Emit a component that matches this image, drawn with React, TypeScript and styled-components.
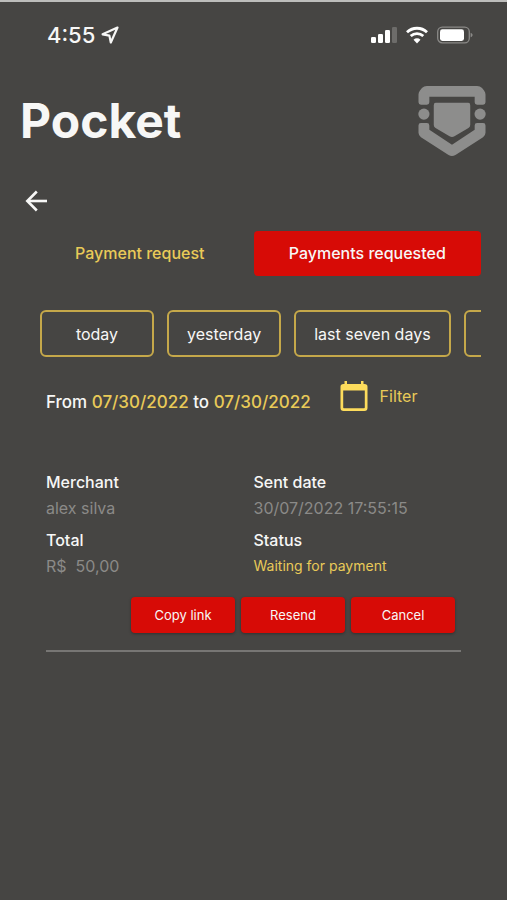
import React from "react";
import styled, { createGlobalStyle } from "styled-components";

const color = {
  background: "#464543",
  edge: "#bdbdbb",
  white: "#f7f7f6",
  gold: "#e9ca58",
  goldBright: "#fddc5c",
  goldLine: "#c5a84a",
  red: "#d70b06",
  muted: "#8b8a88",
  line: "#777674",
  logo: "#8d8d8c",
};

const GlobalStyle = createGlobalStyle`
  *, *::before, *::after { box-sizing: border-box; }
  body {
    margin: 0;
    background: ${color.background};
    color: ${color.white};
    font-family: Inter, "Liberation Sans", sans-serif;
  }
  button { font-family: inherit; cursor: pointer; }
  h1, p, dl, dt, dd { margin: 0; }
`;

const Screen = styled.div`
  min-height: 100vh;
  border-top: 2px solid ${color.edge};
  background: ${color.background};
`;

const StatusBar = styled.div`
  display: flex;
  align-items: center;
  justify-content: space-between;
  height: 66px;
  padding: 0 34px 0 47px;
`;

const StatusGroup = styled.div<{ $gap: number }>`
  display: flex;
  align-items: center;
  gap: ${({ $gap }) => $gap}px;
`;

const Clock = styled.span`
  font-size: 22px;
  line-height: 28px;
  font-weight: 500;
`;

const Header = styled.header`
  display: flex;
  align-items: center;
  justify-content: space-between;
  height: 106px;
  padding: 0 21px 0 20px;
`;

const Title = styled.h1`
  font-size: 48px;
  line-height: 60px;
  font-weight: 700;
`;

const BackButton = styled.button`
  display: block;
  width: 32px;
  height: 32px;
  margin: 11px 0 0 20px;
  padding: 0;
  border: 0;
  background: none;
  color: ${color.white};

  svg { display: block; }
`;

const Content = styled.main`
  padding: 14px 26px 24px;
`;

const Tabs = styled.nav`
  display: grid;
  grid-template-columns: 1fr 1fr;
`;

const Tab = styled.button<{ $active?: boolean }>`
  height: 45px;
  padding: 0 0 2px;
  border: 0;
  border-radius: 4px;
  font-size: 16px;
  line-height: 24px;
  font-weight: 500;
  background: ${({ $active }) => ($active ? color.red : "none")};
  color: ${({ $active }) => ($active ? color.white : color.gold)};
`;

const Chips = styled.div`
  display: flex;
  gap: 13px;
  margin-top: 34px;
  padding-left: 14px;
  overflow-x: auto;
  scrollbar-width: none;
`;

const Chip = styled.button`
  flex: none;
  min-width: 114px;
  height: 47px;
  padding: 0 18px;
  border: 2px solid ${color.goldLine};
  border-radius: 6px;
  background: none;
  color: ${color.white};
  font-size: 16px;
  line-height: 24px;
`;

const FilterRow = styled.div`
  display: flex;
  align-items: flex-end;
  gap: 27px;
  margin-top: 23px;
  padding-left: 20px;
`;

const Range = styled.p`
  font-size: 17px;
  line-height: 20px;
  font-weight: 500;
  white-space: nowrap;
`;

const Day = styled.time`
  color: ${color.gold};
`;

const FilterButton = styled.button`
  display: flex;
  align-items: center;
  gap: 10px;
  padding: 0;
  border: 0;
  background: none;
  color: ${color.gold};
  font-size: 16px;
  line-height: 24px;
`;

const Payment = styled.article`
  margin: 57px 20px 0;
  border-bottom: 2px solid ${color.line};
  padding-bottom: 17px;
`;

const Details = styled.dl`
  display: grid;
  grid-template-columns: 1fr 1fr;
  row-gap: 6px;
`;

const Field = styled.div``;

const Label = styled.dt`
  font-size: 16px;
  line-height: 26px;
  font-weight: 500;
`;

const Value = styled.dd<{ $highlight?: boolean }>`
  font-size: ${({ $highlight }) => ($highlight ? 14 : 16)}px;
  line-height: 26px;
  white-space: pre;
  color: ${({ $highlight }) => ($highlight ? color.gold : color.muted)};
`;

const Actions = styled.div`
  display: flex;
  justify-content: flex-end;
  gap: 6px;
  margin-top: 18px;
  padding-right: 6px;
`;

const ActionButton = styled.button`
  width: 104px;
  height: 36px;
  padding: 0;
  border: 0;
  border-radius: 4px;
  background: ${color.red};
  box-shadow: 0 1px 3px rgba(0, 0, 0, 0.3);
  color: ${color.white};
  font-size: 13px;
  line-height: 20px;
  font-weight: 400;
`;

const LocationIcon = () => (
  <svg width="18" height="18" viewBox="0 0 18 18" fill="none" stroke={color.white} strokeWidth="2.2" strokeLinejoin="round" aria-hidden="true">
    <path d="M16.500 1.500 1.600 8.300 8.400 9.600 9.800 16.500Z" />
  </svg>
);

const SignalIcon = () => (
  <svg width="26" height="18" viewBox="0 0 26 18" fill="#fff" aria-hidden="true">
    <rect x="0" y="11" width="5" height="6" rx="1.3" />
    <rect x="7" y="8" width="5" height="9" rx="1.3" />
    <rect x="14" y="4" width="5" height="13" rx="1.3" />
    <rect x="21" y="1" width="5" height="16" rx="1.3" fill="#6d6c6a" />
  </svg>
);

const WifiIcon = () => (
  <svg width="22" height="18" viewBox="0 0 22 18" fill="none" stroke="#fff" strokeWidth="2.8" aria-hidden="true">
    <path d="M1 6.3C6.6.9 15.4.9 21 6.3" />
    <path d="M4.7 10.1c3.6-3.4 9-3.4 12.6 0" />
    <path d="M11 17.4 7.5 13.7c2-1.8 5-1.8 7 0Z" fill="#fff" stroke="none" />
  </svg>
);

const BatteryIcon = () => (
  <svg width="36" height="18" viewBox="0 0 36 18" fill="none" aria-hidden="true">
    <rect x="0.7" y="1.2" width="31.6" height="15.6" rx="4.6" stroke="#8a8987" strokeWidth="1.3" />
    <rect x="3" y="3.3" width="24" height="11.6" rx="2.4" fill="#fff" />
    <path d="M33.6 6.7c2.6.8 2.6 3.8 0 4.6Z" fill="#8a8987" />
  </svg>
);

const ShieldLogo = () => (
  <svg width="68" height="72" viewBox="0 0 69 72" fill={color.logo} role="img" aria-label="Pocket logo">
    <path d="M9 .5H60Q63 .5 65 2.6L67 5Q68.500 7 68.500 9V17Q68.500 19.500 66 19.500H60Q57.500 19.500 57.500 17V11.500H11.500V17Q11.500 19.500 9 19.500H3Q.5 19.500 .5 17V9Q.5 7 2 5L4 2.600Q6 .5 9 .5Z" />
    <circle cx="6" cy="29" r="5.700" />
    <circle cx="63" cy="29" r="5.700" />
    <path d="M18 17.500H51Q53 17.500 53 20V40Q53 42 51.200 43.200L37 51.500Q34.500 53 32 51.500L17.800 43.200Q16 42 16 40V20Q16 17.500 18 17.500Z" />
    <path d="M3 38H9Q11.500 38 11.500 40.500V45L34.500 60 57.500 45V40.500Q57.500 38 60 38H66Q68.500 38 68.500 40.500V48Q68.500 50.500 66 52.500L38 70.500Q34.500 72.500 31 70.500L3 52.500Q.5 50.500 .5 48V40.500Q.5 38 3 38Z" />
  </svg>
);

const ArrowLeftIcon = () => (
  <svg width="32" height="32" viewBox="0 0 32 32" fill="none" stroke="currentColor" strokeWidth="2.600" aria-hidden="true">
    <path d="M27 16H8" />
    <path d="M16.800 6.500 7.300 16 16.800 25.500" />
  </svg>
);

const CalendarIcon = () => (
  <svg width="32" height="32" viewBox="0 0 32 32" fill={color.goldBright} aria-hidden="true">
    <path
      fillRule="evenodd"
      d="M6.500 1h2.500v3h14V1h2.500v3h1Q29.500 4 29.500 6.700V28Q29.500 31 26.500 31H5.500Q2.500 31 2.500 28V6.700Q2.500 4 5.500 4H6.500ZM5.200 10.500V27.600q0 .7.700.7H26.100q.7 0 .7-.7V10.500Z"
    />
  </svg>
);

const periods = ["today", "yesterday", "last seven days"];

const fields = [
  { label: "Merchant", value: "alex silva" },
  { label: "Sent date", value: "30/07/2022 17:55:15" },
  { label: "Total", value: "R$  50,00" },
  { label: "Status", value: "Waiting for payment", highlight: true },
];

export default function App() {
  return (
    <>
      <GlobalStyle />
      <Screen>
        <StatusBar>
          <StatusGroup $gap={6}>
            <Clock>4:55</Clock>
            <LocationIcon />
          </StatusGroup>
          <StatusGroup $gap={9}>
            <SignalIcon />
            <WifiIcon />
            <BatteryIcon />
          </StatusGroup>
        </StatusBar>
        <Header>
          <Title>Pocket</Title>
          <ShieldLogo />
        </Header>
        <BackButton type="button" aria-label="Back">
          <ArrowLeftIcon />
        </BackButton>
        <Content>
          <Tabs>
            <Tab type="button">Payment request</Tab>
            <Tab type="button" $active aria-current="page">
              Payments requested
            </Tab>
          </Tabs>
          <Chips>
            {periods.map((period) => (
              <Chip key={period} type="button">
                {period}
              </Chip>
            ))}
            <Chip type="button" aria-label="More periods" />
          </Chips>
          <FilterRow>
            <Range>
              From <Day dateTime="2022-07-30">07/30/2022</Day> to{" "}
              <Day dateTime="2022-07-30">07/30/2022</Day>
            </Range>
            <FilterButton type="button">
              <CalendarIcon />
              Filter
            </FilterButton>
          </FilterRow>
          <Payment>
            <Details>
              {fields.map(({ label, value, highlight }) => (
                <Field key={label}>
                  <Label>{label}</Label>
                  <Value $highlight={highlight}>{value}</Value>
                </Field>
              ))}
            </Details>
            <Actions>
              <ActionButton type="button">Copy link</ActionButton>
              <ActionButton type="button">Resend</ActionButton>
              <ActionButton type="button">Cancel</ActionButton>
            </Actions>
          </Payment>
        </Content>
      </Screen>
    </>
  );
}
